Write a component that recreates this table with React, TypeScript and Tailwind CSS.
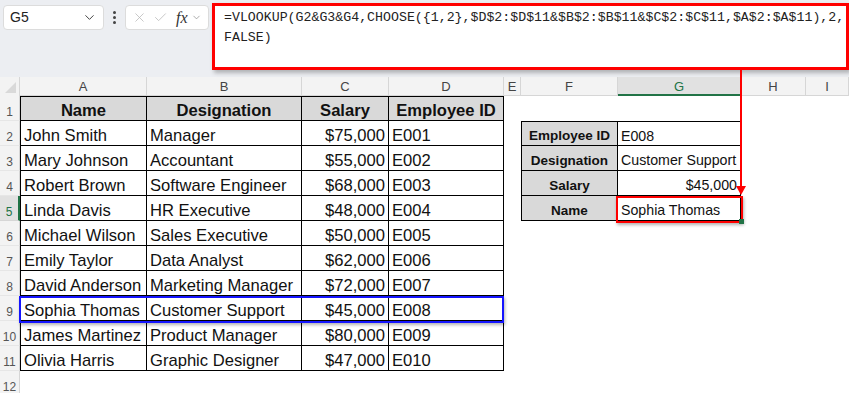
import React from 'react';
import { X, Check, ChevronDown } from 'lucide-react';

const COLS = [
  { key: 'A', w: 'w-[127px]' },
  { key: 'B', w: 'w-[155px]' },
  { key: 'C', w: 'w-[87px]' },
  { key: 'D', w: 'w-[115px]' },
  { key: 'E', w: 'w-[17px]' },
  { key: 'F', w: 'w-[97px]' },
  { key: 'G', w: 'w-[123px]' },
  { key: 'H', w: 'w-[65px]' },
  { key: 'I', w: 'w-[43px]' },
];

const employees = [
  ['John Smith', 'Manager', '$75,000', 'E001'],
  ['Mary Johnson', 'Accountant', '$55,000', 'E002'],
  ['Robert Brown', 'Software Engineer', '$68,000', 'E003'],
  ['Linda Davis', 'HR Executive', '$48,000', 'E004'],
  ['Michael Wilson', 'Sales Executive', '$50,000', 'E005'],
  ['Emily Taylor', 'Data Analyst', '$62,000', 'E006'],
  ['David Anderson', 'Marketing Manager', '$72,000', 'E007'],
  ['Sophia Thomas', 'Customer Support', '$45,000', 'E008'],
  ['James Martinez', 'Product Manager', '$80,000', 'E009'],
  ['Olivia Harris', 'Graphic Designer', '$47,000', 'E010'],
];

// lookup block in F2:G5
const lookup: Record<number, [string, string, boolean]> = {
  2: ['Employee ID', 'E008', false],
  3: ['Designation', 'Customer Support', false],
  4: ['Salary', '$45,000', true],
  5: ['Name', 'Sophia Thomas', false],
};

type Cell = {
  text?: string;
  right?: boolean;
  center?: boolean;
  bold?: boolean;
  gray?: boolean;
  small?: boolean;
  borderL?: boolean;
  borderT?: boolean;
  boxed?: boolean;
};

function buildRow(r: number): Cell[] {
  const cells: Cell[] = COLS.map(() => ({}));
  if (r === 1) {
    ['Name', 'Designation', 'Salary', 'Employee ID'].forEach((t, i) => {
      cells[i] = { text: t, center: true, bold: true, gray: true, boxed: true, borderT: true, borderL: i === 0 };
    });
  } else if (r <= 11) {
    const e = employees[r - 2];
    e.forEach((t, i) => {
      cells[i] = { text: t, right: i === 2, boxed: true, borderL: i === 0 };
    });
  }
  if (lookup[r]) {
    const [label, value, right] = lookup[r];
    cells[5] = { text: label, center: true, bold: true, gray: true, small: true, boxed: true, borderL: true, borderT: r === 2 };
    cells[6] = { text: value, right, small: true, boxed: true, borderT: r === 2 };
  }
  return cells;
}

export default function App() {
  const rows = Array.from({ length: 12 }, (_, i) => i + 1);

  return (
    <div className="relative h-[393px] w-[849px] overflow-hidden bg-white font-['Liberation_Sans',Arial,sans-serif]">
      {/* Formula bar */}
      <div className="flex h-[77px] items-start bg-[#eceef2] pl-[3px] pt-[5px]">
        <div className="flex h-[25px] w-[101px] items-center justify-between rounded-[4px] border border-[#dcdcdc] bg-white pl-[6px] pr-[6px] text-[14px] text-[#222]">
          <span>G5</span>
          <ChevronDown size={15} strokeWidth={1.6} className="text-[#444]" />
        </div>
        <div className="flex h-[25px] w-[21px] flex-col items-center justify-center gap-[2px]">
          <span className="h-[3px] w-[3px] rounded-full bg-[#444]" />
          <span className="h-[3px] w-[3px] rounded-full bg-[#444]" />
          <span className="h-[3px] w-[3px] rounded-full bg-[#444]" />
        </div>
        <div className="flex h-[25px] w-[84px] items-center rounded-[4px] border border-[#dcdcdc] bg-white pl-[6px]">
          <X size={15} strokeWidth={1.2} className="text-[#b5b5b5]" />
          <Check size={15} strokeWidth={1.2} className="ml-[6px] text-[#b5b5b5]" />
          <span className="ml-[8px] font-['Liberation_Serif',serif] text-[16px] italic text-[#333]">fx</span>
          <ChevronDown size={11} strokeWidth={1.5} className="ml-[3px] text-[#888]" />
        </div>
        <div className="ml-[3px] -mt-[2px] h-[67px] flex-1 border-[3px] border-[#ff0000] bg-white pl-[9px] pt-[2px] font-['Liberation_Mono',monospace] text-[13.25px] leading-[20px] text-[#222] shadow-[2px_3px_4px_rgba(0,0,0,0.25)]">
          <div className="whitespace-nowrap">=VLOOKUP(G2&amp;G3&amp;G4,CHOOSE({'{'}1,2{'}'},$D$2:$D$11&amp;$B$2:$B$11&amp;$C$2:$C$11,$A$2:$A$11),2,</div>
          <div>FALSE)</div>
        </div>
      </div>

      {/* Column headers */}
      <div className="flex h-[19px] bg-[#f3f3f3] text-[13px] text-[#444]">
        <div className="relative h-full w-[20px] border-r border-[#d6d6d6]">
          <div className="absolute bottom-[3px] right-[3px] h-0 w-0 border-b-[11px] border-l-[11px] border-b-[#d9d9d9] border-l-transparent" />
        </div>
        {COLS.map((c) => (
          <div
            key={c.key}
            className={`${c.w} flex h-full items-center justify-center border-r border-[#d6d6d6] pt-[2px] ${
              c.key === 'G' ? 'border-b-2 border-b-[#217346] bg-[#e1e1e1] text-[#217346]' : 'border-b border-b-[#d6d6d6]'
            }`}
          >
            {c.key}
          </div>
        ))}
      </div>

      {/* Grid */}
      {rows.map((r) => {
        const cells = buildRow(r);
        return (
          <div key={r} className="flex h-[25px]">
            <div
              className={`flex w-[20px] items-center justify-center border-b pt-[7px] text-[12px] ${
                r === 5
                  ? 'border-r-2 border-r-[#217346] border-b-[#d6d6d6] bg-[#e1e1e1] text-[#217346]'
                  : 'border-r border-r-[#d6d6d6] border-b-[#e6e6e6] bg-[#f3f3f3] text-[#555]'
              }`}
            >
              {r}
            </div>
            {cells.map((c, i) => (
              <div
                key={i}
                className={`${COLS[i].w} flex items-center overflow-visible whitespace-nowrap px-[3px] pt-[6px] text-[#111] ${
                  c.boxed ? 'border-b border-r border-black' : ''
                } ${c.borderL ? 'border-l' : ''} ${c.borderT ? 'border-t' : ''} ${c.gray ? 'bg-[#d9d9d9]' : ''} ${
                  c.right ? 'justify-end' : c.center ? 'justify-center' : 'justify-start'
                } ${c.small ? (c.bold ? 'text-[13.5px]' : 'text-[14.2px]') : 'text-[16.6px]'} ${c.bold ? 'font-bold' : ''}`}
              >
                {c.text}
              </div>
            ))}
          </div>
        );
      })}

      {/* Highlighted source row */}
      <div className="absolute left-[19px] top-[296px] h-[27px] w-[485px] border-2 border-[#1414ff] shadow-[1px_2px_3px_rgba(0,0,0,0.3)]" />

      {/* Arrow from formula bar to result */}
      <div className="absolute left-[740px] top-[70px] h-[118px] w-[2px] bg-[#ff0000]" />
      <div className="absolute left-[736px] top-[186px] h-0 w-0 border-l-[5px] border-r-[5px] border-t-[9px] border-l-transparent border-r-transparent border-t-[#ff0000]" />

      {/* Result cell outline */}
      <div className="absolute left-[616px] top-[196px] h-[27px] w-[127px] border-2 border-[#ff0000] shadow-[1px_2px_3px_rgba(0,0,0,0.3)]" />
      <div className="absolute left-[739px] top-[219px] h-[5px] w-[5px] bg-[#217346]" />
    </div>
  );
}
